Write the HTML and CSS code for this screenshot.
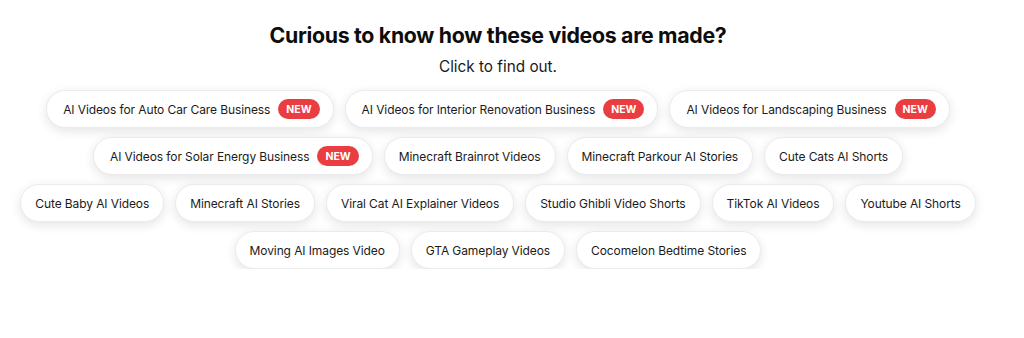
FILE: index.html
```html
<!DOCTYPE html>
<html lang="en">
<head>
<meta charset="utf-8">
<title>Curious to know how these videos are made?</title>
<link rel="stylesheet" href="styles.css">
</head>
<body>
<section class="section">
  <h2 class="title">Curious to know how these videos are made?</h2>
  <p class="subtitle">Click to find out.</p>
  <div class="rows">
    <div class="row">
      <a class="pill" href="#">AI Videos for Auto Car Care Business <span class="badge">NEW</span></a>
      <a class="pill" href="#">AI Videos for Interior Renovation Business <span class="badge">NEW</span></a>
      <a class="pill" href="#">AI Videos for Landscaping Business <span class="badge">NEW</span></a>
    </div>
    <div class="row">
      <a class="pill" href="#">AI Videos for Solar Energy Business <span class="badge">NEW</span></a>
      <a class="pill" href="#">Minecraft Brainrot Videos</a>
      <a class="pill" href="#">Minecraft Parkour AI Stories</a>
      <a class="pill" href="#">Cute Cats AI Shorts</a>
    </div>
    <div class="row">
      <a class="pill" href="#">Cute Baby AI Videos</a>
      <a class="pill" href="#">Minecraft AI Stories</a>
      <a class="pill" href="#">Viral Cat AI Explainer Videos</a>
      <a class="pill" href="#">Studio Ghibli Video Shorts</a>
      <a class="pill" href="#">TikTok AI Videos</a>
      <a class="pill" href="#">Youtube AI Shorts</a>
    </div>
    <div class="row">
      <a class="pill" href="#">Moving AI Images Video</a>
      <a class="pill" href="#">GTA Gameplay Videos</a>
      <a class="pill" href="#">Cocomelon Bedtime Stories</a>
    </div>
  </div>
</section>
</body>
</html>
```

FILE: styles.css
```css
* { box-sizing: border-box; }
html, body { margin: 0; padding: 0; background: #ffffff; }
body {
  font-family: Inter, "Noto Sans", sans-serif;
  color: #111111;
}
.section {
  width: 996px;
  padding-top: 21px;
  display: flex;
  flex-direction: column;
  align-items: center;
}
.title {
  margin: 0;
  font-size: 21.3px;
  font-weight: 700;
  line-height: 28px;
  letter-spacing: -0.3px;
  color: #0d0d0d;
}
.subtitle {
  margin: 8px 0 0;
  font-size: 15.3px;
  line-height: 20px;
  color: #1a1a1a;
}
.rows {
  margin-top: 13px;
  display: flex;
  flex-direction: column;
  align-items: center;
  gap: 9px;
}
.row {
  display: flex;
  justify-content: center;
  gap: 11px;
}
.pill {
  display: inline-flex;
  align-items: center;
  height: 38px;
  padding: 0 13px 0 16px;
  border-radius: 19px;
  background: #ffffff;
  border: 1px solid #ebebeb;
  box-shadow: 0 3px 11px rgba(0, 0, 0, 0.11);
  font-size: 12px;
  color: #1b1b1b;
  text-decoration: none;
  white-space: nowrap;
  letter-spacing: -0.1px;
}
.pill:not(:has(.badge)) {
  padding: 0 14px;
}
.badge {
  display: inline-flex;
  align-items: center;
  height: 20px;
  margin-left: 8px;
  padding: 0 8px;
  border-radius: 10px;
  background: #ea3d41;
  color: #ffffff;
  font-size: 10.5px;
  font-weight: 700;
  letter-spacing: 0;
}
```
